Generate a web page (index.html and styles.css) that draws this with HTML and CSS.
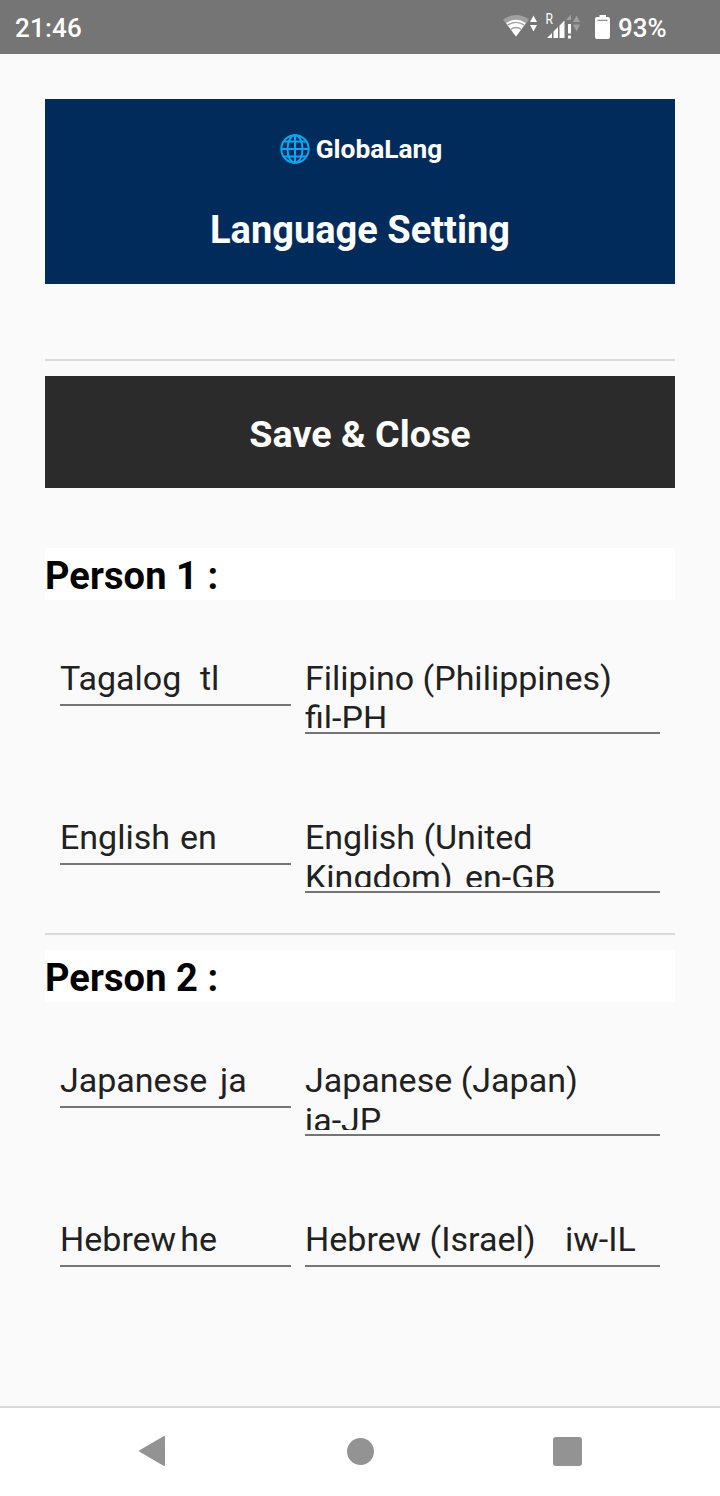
FILE: index.html
```html
<!DOCTYPE html>
<html lang="en">
<head>
    <meta charset="UTF-8">
    <meta name="viewport" content="width=device-width, initial-scale=1.0">
    <title>GlobaLang</title>
    <link rel="stylesheet" href="styles.css">
</head>
<body>
    <div class="status-bar">
        <span class="clock">21:46</span>
        <svg class="status-icons" width="112" height="54" viewBox="500 0 112 54">
            <!-- wifi -->
            <path d="M503 19.5Q516 10.500 529 19.5L516 36.5Z" fill="#a0a0a0"/>
            <path d="M506 23Q516 16.500 526 23L516 36.500Z" fill="#fff"/>
            <path d="M507.500 25.300Q516 19.500 524.500 25.300M510.500 29.500Q516 25.500 521.500 29.500" fill="none" stroke="#a0a0a0" stroke-width="1.300"/>
            <path d="M530 22L533.500 15.500L537 22ZM530 25L533.500 31.500L537 25Z" fill="#fff"/>
            <!-- mobile signal -->
            <text class="roaming" x="545.500" y="24" textLength="7.500" lengthAdjust="spacingAndGlyphs">R</text>
            <path d="M547 38L552 33V38ZM553.500 38V31.500L558 27V38ZM559.500 38V25.500L564.500 20.500V38ZM568 24H571V33.500H568ZM568 35.500H571V38.500H568Z" fill="#fff"/>
            <path d="M566 20L571 14.500V20ZM573 22L576.500 15.500L580 22ZM573 24.500L576.500 31.500L580 24.500Z" fill="#a0a0a0"/>
            <!-- battery -->
            <path d="M599.500 15H606V17H608Q610 17 610 19V37Q610 39 608 39H597Q595 39 595 37V19Q595 17 597 17H599.500Z" fill="#fff"/>
            <path d="M597.500 20.300H607.500" stroke="#757575" stroke-width="1"/>
        </svg>
        <span class="battery-level">93%</span>
    </div>

    <main class="content">
        <header class="app-header">
            <div class="brand">
                <svg width="30" height="30" viewBox="0 0 30 30" fill="none" stroke="#03a9f4" stroke-width="2">
                    <circle cx="15" cy="15" r="13.700"/>
                    <ellipse cx="15" cy="15" rx="7.500" ry="13.700"/>
                    <path d="M15 1V29M1 15H29M4 7.500H26M4 22.500H26"/>
                </svg>
                <span>GlobaLang</span>
            </div>
            <h1>Language Setting</h1>
        </header>

        <hr class="divider">
        <button class="save">Save &amp; Close</button>

        <section class="person first">
            <h2>Person 1 :</h2>
            <div class="language">
                <div class="field"><div class="value">Tagalog&#9;tl</div></div>
                <div class="field tall"><div class="value">Filipino (Philippines)<br>fil-PH</div></div>
            </div>
            <div class="language">
                <div class="field"><div class="value">English&#9;en</div></div>
                <div class="field tall"><div class="value">English (United<br>Kingdom)&#9;en-GB</div></div>
            </div>
        </section>

        <hr class="divider">

        <section class="person">
            <h2>Person 2 :</h2>
            <div class="language">
                <div class="field"><div class="value">Japanese&#9;ja</div></div>
                <div class="field tall"><div class="value">Japanese (Japan)<br>ja-JP</div></div>
            </div>
            <div class="language">
                <div class="field"><div class="value">Hebrew<span class="code">he</span></div></div>
                <div class="field"><div class="value">Hebrew (Israel)&#9;&#9;iw-IL</div></div>
            </div>
        </section>
    </main>

    <nav class="nav-bar">
        <svg width="30" height="34" viewBox="0 0 30 34"><path d="M3 17L27 3V31Z" fill="#939393" stroke="#939393" stroke-width="2" stroke-linejoin="round"/></svg>
        <div class="home"></div>
        <div class="recent"></div>
    </nav>
</body>
</html>
```

FILE: styles.css
```css
* {
    box-sizing: border-box;
}
body {
    margin: 0;
    height: 1496px;
    display: flex;
    flex-direction: column;
    background-color: #fafafa;
    color: #212121;
    font-family: Roboto, sans-serif;
    overflow: hidden;
}
.status-bar {
    display: flex;
    align-items: center;
    height: 54px;
    padding: 0 53px 0 15px;
    background-color: #757575;
    color: white;
    font-size: 26px;
    font-weight: 500;
}
.clock {
    flex: 1;
    padding-top: 2px;
    letter-spacing: 0.2px;
}
.roaming {
    font-size: 14.5px;
    font-weight: 400;
    fill: white;
}
.battery-level {
    width: 49px;
    margin-left: 6px;
    padding-top: 2px;
    white-space: nowrap;
}
.content {
    flex: 1;
    padding: 45px 45px 0;
}
.app-header {
    height: 185px;
    padding-top: 34px;
    background-color: #002b5b;
    color: white;
    text-align: center;
}
.brand {
    display: flex;
    align-items: center;
    justify-content: center;
    gap: 6px;
    height: 32px;
    padding-left: 2px;
    font-size: 26.3px;
    font-weight: 700;
}
h1 {
    margin: 43px 0 0;
    font-size: 38px;
    line-height: 44px;
    font-weight: 700;
}
.divider {
    height: 2px;
    margin: 0;
    border: none;
    background-color: #dadada;
}
.app-header + .divider {
    margin: 75px 0 15px;
}
.save {
    display: block;
    width: 100%;
    height: 112px;
    padding: 3px 0 0;
    border: none;
    background-color: #2b2b2b;
    color: white;
    font-family: inherit;
    font-size: 37.7px;
    font-weight: 700;
}
.person {
    height: 385px;
    margin-top: 15px;
}
.person.first {
    margin-top: 60px;
}
h2 {
    height: 52px;
    margin: 0 0 58px;
    background-color: white;
    color: black;
    font-size: 38px;
    line-height: 56px;
    font-weight: 700;
    letter-spacing: 0.1px;
}
.language {
    display: grid;
    grid-template-columns: 231px 355px;
    gap: 14px;
    align-items: start;
    height: 159px;
    margin-left: 15px;
}
.field {
    padding-bottom: 4px;
    border-bottom: 2px solid #757575;
}
.value {
    height: 42px;
    overflow: hidden;
    font-size: 34px;
    line-height: 40px;
    white-space: pre;
    tab-size: 20px;
}
/* the second line does not fit fully, so it is clipped above the underline */
.tall .value {
    height: 70px;
}
.code {
    margin-left: 4px;
}
.nav-bar {
    display: flex;
    justify-content: space-between;
    align-items: center;
    height: 90px;
    padding: 0 138px 2px 137px;
    border-top: 2px solid #dadada;
    background-color: white;
}
.home {
    width: 27px;
    height: 27px;
    border-radius: 50%;
    background-color: #939393;
}
.recent {
    width: 29px;
    height: 29px;
    border-radius: 3px;
    background-color: #939393;
}
```
